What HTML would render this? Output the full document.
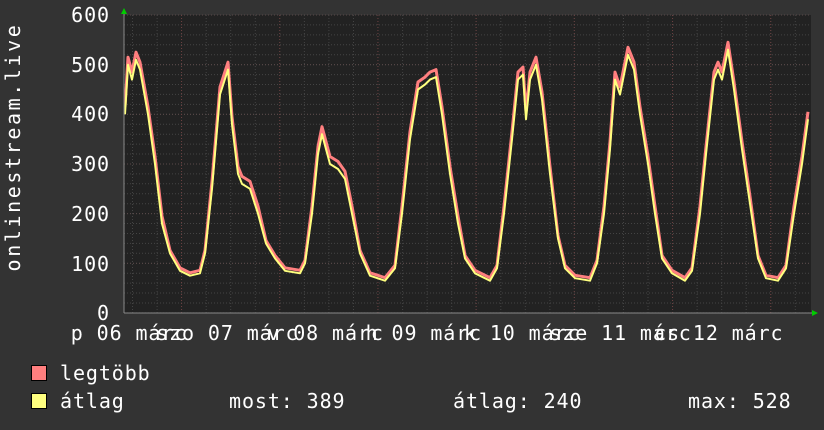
<!DOCTYPE html>
<html><head><meta charset="utf-8"><style>
html,body{margin:0;padding:0;background:#333;}
svg{display:block}
text{font-family:"DejaVu Sans Mono","Liberation Mono",monospace;font-size:20px;fill:#fff;letter-spacing:0.9px}
</style></head><body>
<svg id="s" width="824" height="430" xmlns="http://www.w3.org/2000/svg">
<rect width="824" height="430" fill="#333"/>
<rect x="124" y="15" width="687" height="298" fill="#222"/>
<g id="grid"></g>
<polyline id="mx" fill="none" stroke="#ff7f7f" stroke-width="3" stroke-linejoin="round"/>
<polyline id="av" fill="none" stroke="#ffff7f" stroke-width="2" stroke-linejoin="round"/>
<line x1="124" y1="313" x2="814" y2="313" stroke="#888" stroke-width="1"/>
<line x1="124" y1="12" x2="124" y2="313" stroke="#888" stroke-width="1"/>
<polygon points="121,14 127,14 124,8" fill="#0c0"/>
<polygon points="812,310 812,316 818,313" fill="#0c0"/>
<g text-anchor="end">
<text x="110" y="22">600</text><text x="110" y="72">500</text><text x="110" y="121">400</text>
<text x="110" y="171">300</text><text x="110" y="221">200</text><text x="110" y="271">100</text>
<text x="110" y="320">0</text>
</g>
<text transform="translate(20,147) rotate(-90)" text-anchor="middle" style="letter-spacing:2.6px">onlinestream.live</text>
<g text-anchor="middle" id="xl"></g>
<rect x="31.5" y="365.5" width="15" height="15" fill="#ff7f7f" stroke="#000"/>
<rect x="31.5" y="393.5" width="15" height="15" fill="#ffff7f" stroke="#000"/>
<text x="60" y="380">legtöbb</text>
<text x="60" y="408">átlag</text>
<text x="229" y="408">most: 389</text>
<text x="453" y="408">átlag: 240</text>
<text x="688" y="408">max: 528</text>
</svg>
<script>
var g=document.getElementById('grid'),h='';
for(var y=15;y<313;y+=9.93){h+='<line x1="124" x2="811" y1="'+y.toFixed(1)+'" y2="'+y.toFixed(1)+'" stroke="#444" stroke-dasharray="1,2"/>';}
for(var i=0;i<6;i++){var y=15+i*49.67;h+='<line x1="124" x2="811" y1="'+y+'" y2="'+y+'" stroke="#5a4a4a" stroke-dasharray="1,2"/>';}
for(var x=132.5;x<811;x+=24.55){h+='<line y1="15" y2="313" x1="'+x.toFixed(1)+'" x2="'+x.toFixed(1)+'" stroke="#444" stroke-dasharray="1,2"/>';}
for(var x=181.5;x<811;x+=98.2){h+='<line y1="15" y2="313" x1="'+x.toFixed(1)+'" x2="'+x.toFixed(1)+'" stroke="#6a4040" stroke-dasharray="1,2"/>';}
g.innerHTML=h;
var L=["p 06 márc","szo 07 márc","v 08 márc","h 09 márc","k 10 márc","sze 11 márc","cs 12 márc"],xh='';
for(var k=0;k<7;k++){xh+='<text x="'+(129+98.3*k).toFixed(1)+'" y="340">'+L[k]+'</text>';}
document.getElementById('xl').innerHTML=xh;
var d=[125,400,128,500,132,470,136,510,140,490,148,400,155,300,162,180,170,120,180,85,190,75,200,80,205,120,212,250,220,440,228,490,232,380,238,280,242,260,250,250,258,200,266,140,275,110,285,85,300,80,305,100,312,200,318,320,322,360,330,300,338,290,345,270,352,200,360,120,370,75,385,65,395,90,402,200,410,350,418,450,425,460,430,470,436,475,442,400,450,280,458,180,465,110,475,80,490,65,497,90,504,200,512,350,518,470,523,480,526,390,530,470,536,500,542,430,550,280,558,150,565,90,575,70,590,65,597,100,604,200,610,330,615,470,620,440,624,480,628,520,634,490,640,400,648,300,655,200,662,110,672,80,685,65,692,85,700,200,706,320,714,470,718,490,722,470,728,530,734,450,742,330,750,220,758,110,766,70,778,65,786,90,794,200,802,300,808,390];
var a='',m='';
for(var j=0;j<d.length;j+=2){var v=d[j+1];a+=d[j]+','+(313-v*0.4967).toFixed(1)+' ';m+=d[j]+','+(313-(v+(v>150?15:6))*0.4967).toFixed(1)+' ';}
document.getElementById('av').setAttribute('points',a);
document.getElementById('mx').setAttribute('points',m);
</script>
</body></html>
